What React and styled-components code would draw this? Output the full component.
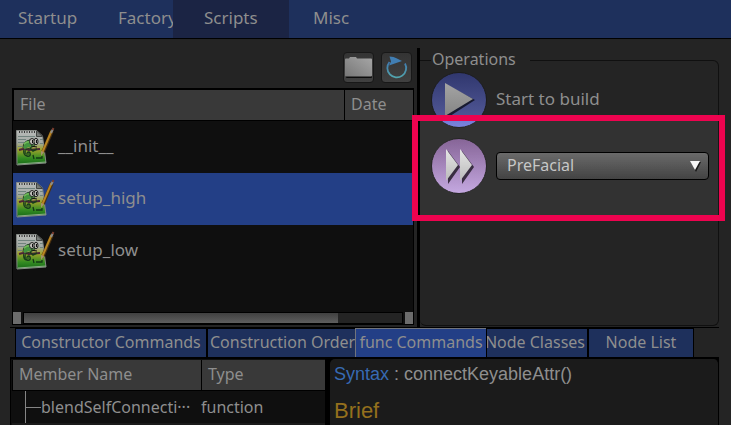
import React, { useState } from "react";
import styled, { createGlobalStyle } from "styled-components";

const GlobalStyle = createGlobalStyle`
  *, *::before, *::after { box-sizing: border-box; }
  html, body { margin: 0; background: #242424; }
  body {
    color: #8e8e8e;
    font-family: "Noto Sans", "Open Sans", sans-serif;
    font-size: 16px;
    line-height: 24px;
    overflow: hidden;
  }
  button, select { font: inherit; color: inherit; }
`;

const Window = styled.div`
  display: flex;
  flex-direction: column;
  min-height: 100vh;
`;

const MainTabs = styled.nav`
  display: flex;
  background: #1e305c;
  border-bottom: 1px solid #000;
`;

const MainTab = styled.button`
  flex: 0 0 ${(p) => p.$width}px;
  height: 38px;
  padding: 0 0 2px ${(p) => p.$indent}px;
  border: 0;
  overflow: hidden;
  font-size: 17px;
  white-space: nowrap;
  text-align: left;
  background: ${(p) => (p.$active ? "#1b2444" : "transparent")};
`;

const Workspace = styled.main`
  display: flex;
  flex: 1;
  flex-direction: column;
  padding: 9px 12px 0 10px;
`;

const UpperPane = styled.div`
  display: flex;
`;

const FilesPane = styled.section`
  display: flex;
  flex: 1;
  flex-direction: column;
  min-width: 0;
  padding: 4px 3px 2px 2px;
`;

const Toolbar = styled.div`
  display: flex;
  justify-content: flex-end;
  gap: 7px;
  padding: 0 2px 5px 0;
`;

const ToolButton = styled.button`
  display: grid;
  place-items: center;
  width: 31px;
  height: 31px;
  padding: 0;
  border: 1px solid #181818;
  border-radius: 4px;
  background: linear-gradient(#343434, #404040);
`;

const FilesFrame = styled.div`
  display: flex;
  flex: 1;
  flex-direction: column;
  border: 1px solid #000;
  border-width: 2px 1px 1px;
  background: #0f0f0f;
`;

const Table = styled.table`
  width: 100%;
  table-layout: fixed;
  border-collapse: separate;
  border-spacing: 0;
`;

const Th = styled.th`
  width: ${(p) => (p.$width ? `${p.$width}px` : "auto")};
  height: 31px;
  padding: 0 6px 2px;
  border-bottom: 1px solid #000;
  border-left: 1px solid #000;
  background: #393939;
  font-weight: 400;
  text-align: left;
`;

const FileRow = styled.tr`
  background: ${(p) => (p.$selected ? "#233f86" : "#0f0f0f")};
`;

const FileCell = styled.td`
  height: 52px;
  padding: 0 0 0 3px;
  font-size: 17px;
`;

const FileLabel = styled.div`
  display: flex;
  align-items: center;
  gap: 2px;

  span { padding-bottom: 2px; }
`;

const ScrollBar = styled.div`
  display: flex;
  gap: 2px;
  height: 12px;
  margin-top: auto;
`;

const ScrollEnd = styled.button`
  width: 8px;
  padding: 0;
  border: 0;
  background: #6c6c6c;
`;

const ScrollTrack = styled.div`
  flex: 1;
  border: 1px solid #000;
  background: #242424;
`;

const ScrollThumb = styled.div`
  width: 83%;
  height: 10px;
  background: linear-gradient(#404040, #5e5e5e);
`;

const Splitter = styled.div`
  width: 3px;
  background: #000;
`;

const Operations = styled.fieldset`
  flex: 0 0 299px;
  min-width: 0;
  margin: 0 0 1px;
  padding: 0 9px 121px 11px;
  border: 1px solid #101010;
  border-left: 0;
  border-radius: 0 6px 6px 6px;
`;

const Legend = styled.legend`
  padding: 0 14px 2px 1px;
  line-height: 22px;
`;

const OperationRow = styled.div`
  position: relative;
  display: flex;
  align-items: center;
  gap: 9px;
  margin-bottom: 10px;
`;

const OperationLabel = styled.label`
  padding-bottom: 2px;
  font-size: 17px;
`;

const RoundButton = styled.button`
  display: grid;
  flex: none;
  place-items: center;
  width: 56px;
  height: 56px;
  padding: 0;
  border: 1px solid #1c1c1c;
  border-radius: 50%;
  background: ${(p) =>
    p.$tone === "blue"
      ? "linear-gradient(#30376e, #575e9e)"
      : "linear-gradient(#60486c, #8c78a0)"};
`;

const SelectBox = styled.div`
  position: relative;
  flex: 1;
  height: 28px;

  svg {
    position: absolute;
    top: 8px;
    right: 8px;
    pointer-events: none;
  }
`;

const Select = styled.select`
  display: block;
  width: 100%;
  height: 28px;
  padding: 0 24px 2px 10px;
  border: 1px solid #000;
  border-radius: 4px;
  appearance: none;
  background: linear-gradient(#4c4c4c, #303030);
`;

const Highlight = styled.div`
  position: absolute;
  inset: -23px -16px -27px -19px;
  border: 6px solid #ee034f;
  backdrop-filter: brightness(1.4);
  pointer-events: none;
`;

const LowerTabs = styled.div`
  display: flex;
  gap: 2px;
  height: 32px;
  border: solid #000;
  border-width: 1px 0 2px;
`;

const LowerTab = styled.button`
  flex: 0 0 ${(p) => p.$width}px;
  height: ${(p) => (p.$active ? 29 : 28)}px;
  margin: ${(p) => (p.$active ? "0 -2px" : "1px 0 0")};
  padding: 0 ${(p) => (p.$active ? 0 : 2)}px 2px;
  display: flex;
  align-items: center;
  justify-content: ${(p) => p.$align || "center"};
  overflow: hidden;
  white-space: nowrap;
  border: ${(p) => (p.$active ? "1px solid #71747c" : "0")};
  border-bottom: 0;
  box-shadow: ${(p) => (p.$active ? "none" : "0 0 0 1px #000")};
  background: ${(p) => (p.$active ? "#233f86" : "#1e305c")};

  &:first-child { margin-left: 6px; }
`;

const LowerPane = styled.div`
  display: flex;
  flex: 1;
  gap: 5px;
  background: #000;
`;

const Members = styled.section`
  flex: 0 0 315px;
  min-width: 0;
  padding: 1px 0 0 1px;
  background: #0f0f0f;
  border-left: 1px solid #000;
`;

const MemberCell = styled.td`
  height: 32px;
  padding: 0;
  white-space: nowrap;
`;

const MemberName = styled.div`
  display: flex;
  align-items: center;
  padding-left: 13px;
`;

const NextRow = styled.div`
  height: 2px;
  background: #1a1a1a;
`;

const Docs = styled.article`
  flex: 1;
  padding: 0 4px;
  border-right: 1px solid #000;
  border-radius: 5px 5px 0 0;
  background: #1b1b1b;
  font-family: "Liberation Sans", Arial, sans-serif;
`;

const Syntax = styled.p`
  margin: 3px 0 12px;
  font-size: 18px;
  line-height: 24px;

  span { color: #376ab3; }
`;

const Brief = styled.h2`
  margin: 0;
  color: #94701d;
  font-size: 22px;
  font-weight: 400;
  line-height: 26px;
`;

function FolderIcon() {
  return (
    <svg width="29" height="23" viewBox="0 0 29 23" aria-hidden="true">
      <defs>
        <linearGradient id="folder" x1="0" y1="1" x2="1" y2="0">
          <stop offset="0" stopColor="#777" />
          <stop offset="1" stopColor="#a6a6a6" />
        </linearGradient>
      </defs>
      <path d="M2 5v16q0 1 1 1h24q1 0 1-1V6z" fill="#0c0c0c" />
      <path d="M1 3.500q0-1 1-1h3l1-1.500h6l1 1.500h14q1 0 1 1v16q0 1-1 1H2q-1 0-1-1z" fill="url(#folder)" />
    </svg>
  );
}

function ReloadIcon() {
  return (
    <svg width="23" height="23" viewBox="0 0 23 23" aria-hidden="true">
      <defs>
        <linearGradient id="reload" x1="0" y1="0" x2="0" y2="1">
          <stop offset="0" stopColor="#3f78ad" />
          <stop offset="1" stopColor="#52a5ae" />
        </linearGradient>
      </defs>
      <path d="M4.500 6a9.400 9.400 0 1 0 15.500 1.500" fill="none" stroke="url(#reload)" strokeWidth="1.800" />
      <path d="M4.500.5Q9 .5 11.500 2.200L17 5 4 9.500l2-4z" fill="#417eb3" />
    </svg>
  );
}

function PlayIcon() {
  return (
    <svg width="36" height="40" viewBox="0 0 36 40" aria-hidden="true">
      <defs>
        <linearGradient id="play" x1="0" y1="0" x2="0" y2="1">
          <stop offset="0" stopColor="#a4a4a4" />
          <stop offset="1" stopColor="#858585" />
        </linearGradient>
      </defs>
      <path d="M6 5 34 20 6 38z" fill="#171a31" />
      <path d="M4 3 32 19 4 36z" fill="url(#play)" />
    </svg>
  );
}

function ForwardIcon() {
  return (
    <svg width="34" height="40" viewBox="0 0 34 40" aria-hidden="true">
      <path d="M6 5 18 21 6 38zM20 5 32 21 20 38z" fill="#29202f" />
      <path d="M4 3 16 19 4 35zM18 3 30 19 18 35z" fill="url(#play)" />
    </svg>
  );
}

function ScriptIcon() {
  return (
    <svg width="40" height="42" viewBox="0 0 40 42" aria-hidden="true">
      <defs>
        <linearGradient id="sheet" x1="0" y1="0" x2="0" y2="1">
          <stop offset="0" stopColor="#b9bbb9" />
          <stop offset="0.350" stopColor="#a3aaa5" />
          <stop offset="0.550" stopColor="#9fa32b" />
          <stop offset="0.800" stopColor="#348c22" />
          <stop offset="1" stopColor="#156818" />
        </linearGradient>
      </defs>
      <path d="M.5 4.500h20l6 5.500L30 37 1 39z" fill="url(#sheet)" stroke="#858985" />
      <path d="M20.500 5v5.500h6z" fill="#777b78" stroke="#424542" />
      <path d="M3 6h17" stroke="#373737" strokeWidth="2" strokeDasharray="1 1.500" />
      <path d="M2 10.500h17M2 13.500h8M2 16.500h6M24 13.500h3M24 17.500h3M2 20.500h4" stroke="#71837e" />
      <path d="M2 38 30 36" stroke="#8cae87" />
      <path d="M3 24q6-2 10 0l11-1" fill="none" stroke="#4b2437" strokeWidth="2" />
      <path d="M7 22q0-7 7-8l5 3-1 3-4 2q-5 1-5 4t4 2" fill="none" stroke="#173f1d" strokeWidth="1" />
      <path d="M7.500 21q1-6 7-6.500l4 3-2 3-5 1-3 2z" fill="#43943f" />
      <path d="M8 18q3-3 8-2" fill="none" stroke="#70b956" strokeWidth="1.500" />
      <path d="M8 24q-1 5 3 6t3-3q-1-2-3 0M14 22l3 3 4-2" fill="none" stroke="#173c1b" strokeWidth="1.500" />
      <ellipse cx="16" cy="15.500" rx="2.500" ry="3" fill="#c1c1bb" stroke="#222" />
      <ellipse cx="20" cy="15.500" rx="2" ry="3.300" fill="#b3b3ad" stroke="#222" />
      <path d="M16.500 14v3M20.500 14v3M15 20l6 1" stroke="#111" />
      <path d="m17 29 1 4M20 32h6v-2" fill="none" stroke="#133815" strokeWidth="1.300" />
      <path d="m36 5-9 21" stroke="#4b3211" strokeWidth="3.500" />
      <path d="m35.500 5-9 21" stroke="#b98521" strokeWidth="2" />
      <path d="m25 25 3 1-3 4z" fill="#a4936d" />
      <path d="m35 7 2-4" stroke="#8c8c8c" strokeWidth="2" />
      <path d="m36.500 4 1-2" stroke="#793a2b" strokeWidth="2" />
    </svg>
  );
}

function TreeBranch() {
  return (
    <svg width="16" height="32" viewBox="0 0 16 32" aria-hidden="true">
      <path d="M.5 0v32M1 16.500h15" stroke="#858585" />
    </svg>
  );
}

const mainTabs = [
  { name: "Startup", width: 94, indent: 18 },
  { name: "Factory", width: 79, indent: 24 },
  { name: "Scripts", width: 116, indent: 31 },
  { name: "Misc", width: 84, indent: 24 },
];

const lowerTabs = [
  { name: "Constructor Commands", width: 190 },
  { name: "Construction Order", width: 147, align: "flex-start" },
  { name: "func Commands", width: 132 },
  { name: "Node Classes", width: 100, align: "flex-end" },
  { name: "Node List", width: 104 },
];

const files = ["__init__", "setup_high", "setup_low"];

export default function App() {
  const [mainTab, setMainTab] = useState("Scripts");
  const [lowerTab, setLowerTab] = useState("func Commands");
  const [file, setFile] = useState("setup_high");

  return (
    <>
      <GlobalStyle />
      <Window>
        <MainTabs>
          {mainTabs.map((t) => (
            <MainTab
              key={t.name}
              $width={t.width}
              $indent={t.indent}
              $active={t.name === mainTab}
              onClick={() => setMainTab(t.name)}
            >
              {t.name}
            </MainTab>
          ))}
        </MainTabs>
        <Workspace>
          <UpperPane>
            <FilesPane>
              <Toolbar>
                <ToolButton aria-label="Open folder"><FolderIcon /></ToolButton>
                <ToolButton aria-label="Reload"><ReloadIcon /></ToolButton>
              </Toolbar>
              <FilesFrame>
                <Table>
                  <thead>
                    <tr>
                      <Th>File</Th>
                      <Th $width={69}>Date</Th>
                    </tr>
                  </thead>
                  <tbody>
                    {files.map((name) => (
                      <FileRow key={name} $selected={name === file} onClick={() => setFile(name)}>
                        <FileCell>
                          <FileLabel><ScriptIcon /><span>{name}</span></FileLabel>
                        </FileCell>
                        <FileCell />
                      </FileRow>
                    ))}
                  </tbody>
                </Table>
                <ScrollBar>
                  <ScrollEnd aria-label="Scroll left" />
                  <ScrollTrack><ScrollThumb /></ScrollTrack>
                  <ScrollEnd aria-label="Scroll right" />
                </ScrollBar>
              </FilesFrame>
            </FilesPane>
            <Splitter />
            <Operations>
              <Legend>Operations</Legend>
              <OperationRow>
                <RoundButton id="build" $tone="blue" aria-labelledby="build-label"><PlayIcon /></RoundButton>
                <OperationLabel id="build-label" htmlFor="build">Start to build</OperationLabel>
              </OperationRow>
              <OperationRow>
                <RoundButton $tone="purple" aria-label="Run to step"><ForwardIcon /></RoundButton>
                <SelectBox>
                  <Select aria-label="Build step" defaultValue="PreFacial">
                    <option>PreFacial</option>
                  </Select>
                  <svg width="12" height="12" viewBox="0 0 12 12" aria-hidden="true">
                    <path d="M2 2h10L7 12z" fill="#111" />
                    <path d="M1 1h10L6 10z" fill="#b0b0b0" />
                  </svg>
                </SelectBox>
                <Highlight />
              </OperationRow>
            </Operations>
          </UpperPane>
          <LowerTabs>
            {lowerTabs.map((t) => (
              <LowerTab
                key={t.name}
                $width={t.width}
                $align={t.align}
                $active={t.name === lowerTab}
                onClick={() => setLowerTab(t.name)}
              >
                {t.name}
              </LowerTab>
            ))}
          </LowerTabs>
          <LowerPane>
            <Members>
              <Table>
                <thead>
                  <tr>
                    <Th>Member Name</Th>
                    <Th $width={124}>Type</Th>
                  </tr>
                </thead>
                <tbody>
                  <tr>
                    <MemberCell>
                      <MemberName><TreeBranch />blendSelfConnecti···</MemberName>
                    </MemberCell>
                    <MemberCell>function</MemberCell>
                  </tr>
                </tbody>
              </Table>
              <NextRow />
            </Members>
            <Docs>
              <Syntax><span>Syntax</span> : connectKeyableAttr()</Syntax>
              <Brief>Brief</Brief>
            </Docs>
          </LowerPane>
        </Workspace>
      </Window>
    </>
  );
}
